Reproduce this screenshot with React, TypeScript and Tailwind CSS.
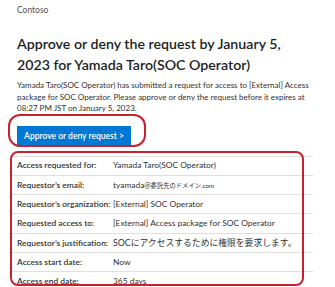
import React from "react";

const rows: { label: string; value: React.ReactNode }[] = [
  { label: "Access requested for:", value: "Yamada Taro(SOC Operator)" },
  {
    label: "Requestor’s email:",
    value: (
      <span>
        tyamada<span className="text-[6.3px]">＠委託先のドメイン.com</span>
      </span>
    ),
  },
  { label: "Requestor’s organization:", value: "[External] SOC Operator" },
  { label: "Requested access to:", value: "[External] Access package for SOC Operator" },
  { label: "Requestor’s justification:", value: <span className="text-[8.8px]">SOCにアクセスするために権限を要求します。</span> },
  { label: "Access start date:", value: "Now" },
  { label: "Access end date:", value: "365 days" },
];

export default function App() {
  return (
    <div
      className="relative w-[335px] h-[287px] overflow-hidden bg-white text-[#323130]"
      style={{ fontFamily: 'Lato, "Noto Sans CJK JP", sans-serif' }}
    >
      <div className="pl-[17px] pt-[4px]">
        <div className="text-[8.5px] leading-[12px] text-[#505050]">Contoso</div>
        <h1 className="mt-[17px] text-[14.2px] leading-[21px] font-semibold text-[#201f1e] whitespace-nowrap">
          Approve or deny the request by January 5,
          <br />
          2023 for Yamada Taro(SOC Operator)
        </h1>
        <p className="mt-[5px] text-[8px] leading-[11.5px] text-[#323130] whitespace-nowrap">
          Yamada Taro(SOC Operator) has submitted a request for access to [External] Access
          <br />
          package for SOC Operator. Please approve or deny the request before it expires at
          <br />
          08:27 PM JST on January 5, 2023.
        </p>
        <div className="mt-[11px] flex">
          <div className="h-[21px] w-[114px] bg-[#0078d4] text-white text-[8.5px] font-semibold flex items-center justify-center whitespace-nowrap">
            Approve or deny request &gt;
          </div>
        </div>
      </div>
      <div className="mt-[9px] ml-[10px] w-[303px] border-t border-[#e1dfdd]">
        {rows.map((r) => (
          <div
            key={r.label}
            className="flex h-[19.3px] items-center border-b border-[#e1dfdd] text-[8.4px] text-[#323130]"
          >
            <div className="w-[103px] pl-[7px] shrink-0 font-semibold whitespace-nowrap">{r.label}</div>
            <div className="whitespace-nowrap">{r.value}</div>
          </div>
        ))}
      </div>
      <div className="absolute left-[8px] top-[114px] w-[138px] h-[33px] border-2 border-[#c8202f] rounded-[12px]" />
      <div className="absolute left-[10px] top-[151px] w-[294px] h-[135px] border-2 border-[#c8202f] rounded-[8px]" />
    </div>
  );
}
